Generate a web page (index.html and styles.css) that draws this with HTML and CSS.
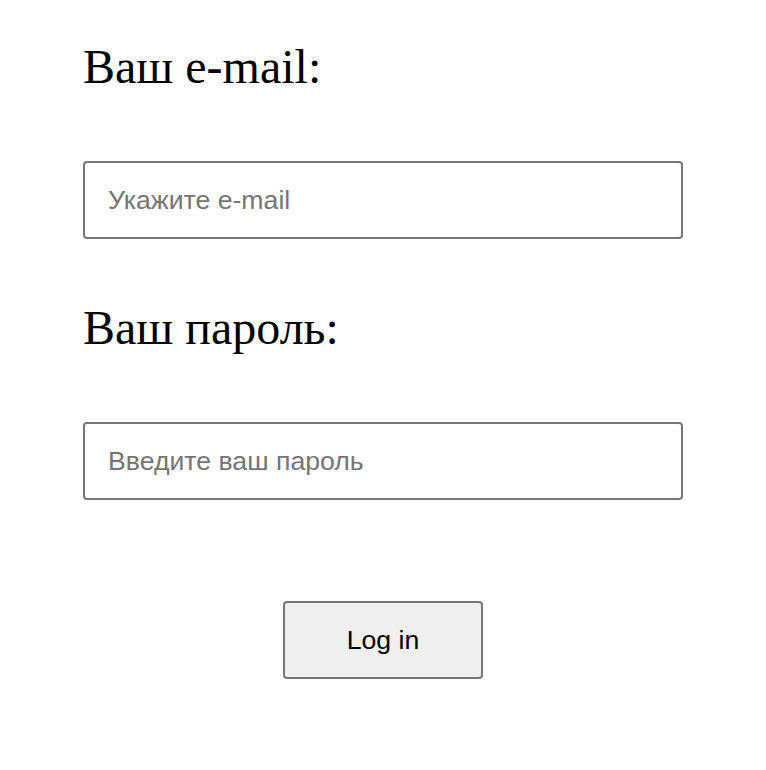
FILE: index.html
```html
<!DOCTYPE html>
<html lang="ru">
<head>
<meta charset="utf-8">
<link rel="stylesheet" href="styles.css">
</head>
<body>
<form class="login">
  <label class="label label-first" for="email">Ваш e-mail:</label>
  <input class="field" id="email" type="email" placeholder="Укажите e-mail">
  <label class="label label-second" for="pass">Ваш пароль:</label>
  <input class="field" id="pass" type="password" placeholder="Введите ваш пароль">
  <button class="btn" type="button">Log in</button>
</form>
</body>
</html>
```
FILE: styles.css
```css
html, body {
  margin: 0;
  padding: 0;
  background: #fff;
}
.login {
  display: flex;
  flex-direction: column;
  width: 600px;
  padding: 43px 0 0 83px;
}
.label {
  display: block;
  font-family: "Liberation Serif", "Times New Roman", serif;
  font-size: 48px;
  line-height: 48px;
  color: #000;
}
.label-first {
  margin-bottom: 70px;
}
.label-second {
  margin-top: 65px;
  margin-bottom: 70px;
}
.field {
  box-sizing: border-box;
  width: 600px;
  height: 78px;
  margin: 0;
  padding: 0 23px;
  border: 2px solid #767676;
  border-radius: 4px;
  font-family: "Liberation Sans", Arial, sans-serif;
  font-size: 26.67px;
  color: #000;
  background: #fff;
  outline: none;
}
.field::placeholder {
  color: #757575;
}
.btn {
  box-sizing: border-box;
  align-self: center;
  width: 200px;
  height: 78px;
  margin-top: 101px;
  border: 2px solid #767676;
  border-radius: 4px;
  background: #efefef;
  font-family: "Liberation Sans", Arial, sans-serif;
  font-size: 26.67px;
  color: #000;
  padding: 0;
}
```
